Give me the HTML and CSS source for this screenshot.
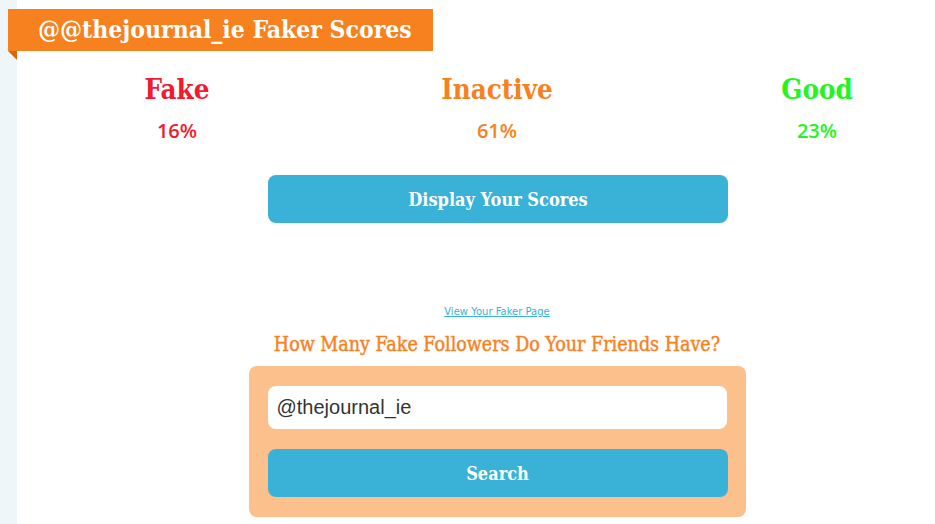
FILE: index.html
```html
<!DOCTYPE html>
<html>
<head>
<meta charset="utf-8">
<link rel="stylesheet" href="styles.css">
</head>
<body>
<div class="page">
  <div class="ribbon">@@thejournal_ie Faker Scores</div>
  <div class="scores">
    <div class="score fake"><div class="label">Fake</div><div class="pct">16%</div></div>
    <div class="score inactive"><div class="label">Inactive</div><div class="pct">61%</div></div>
    <div class="score good"><div class="label">Good</div><div class="pct">23%</div></div>
  </div>
  <div class="center">
    <button class="btn display">Display Your Scores</button>
    <a class="link" href="#">View Your Faker Page</a>
    <h2 class="friends">How Many Fake Followers Do Your Friends Have?</h2>
    <div class="searchbox">
      <input class="field" type="text" value="@thejournal_ie">
      <button class="btn search">Search</button>
    </div>
  </div>
</div>
</body>
</html>
```
FILE: styles.css
```css
html, body { margin: 0; padding: 0; overflow: hidden; }
body { background: #eef6fa; height: 524px; }
.page {
  margin-left: 17px;
  width: 960px;
  height: 524px;
  background: #fff;
  padding-top: 9px;
  box-sizing: border-box;
}
.ribbon {
  position: relative;
  display: inline-block;
  margin-left: -9px;
  height: 42px;
  line-height: 42px;
  padding: 0 21px 0 30px;
  background: #f7811e;
  color: #fff;
  font-family: "DejaVu Serif", serif;
  font-stretch: condensed;
  font-weight: bold;
  font-size: 24.5px;
  white-space: nowrap;
}
.ribbon::after {
  content: "";
  position: absolute;
  left: 0;
  top: 42px;
  border-top: 9px solid #d6680e;
  border-left: 9px solid transparent;
}
.scores {
  display: grid;
  grid-template-columns: 320px 320px 320px;
  margin-top: 20px;
  text-align: center;
}
.label {
  font-family: "DejaVu Serif", serif;
  font-stretch: condensed;
  font-weight: bold;
  font-size: 27.5px;
  line-height: 36px;
}
.pct {
  margin-top: 12px;
  font-family: "Open Sans", sans-serif;
  font-weight: 600;
  font-size: 20px;
  line-height: 24px;
}
.fake { color: #f21a2d; }
.inactive { color: #f7811e; }
.good { color: #25f51e; }
.center {
  display: flex;
  flex-direction: column;
  align-items: center;
}
.btn {
  display: block;
  width: 460px;
  height: 48px;
  border: none;
  border-radius: 8px;
  background: #3ab1d6;
  color: #fff;
  font-family: "DejaVu Serif", serif;
  font-stretch: condensed;
  font-weight: bold;
  font-size: 18px;
  padding: 0;
}
.display { margin-top: 32px; margin-left: 2px; }
.link {
  margin-top: 82px;
  font-family: "DejaVu Sans", sans-serif;
  font-size: 10px;
  line-height: 14px;
  color: #3ab1d6;
  text-decoration: underline;
}
.friends {
  margin: 14px 0 0 0;
  font-family: "DejaVu Serif", serif;
  font-stretch: condensed;
  font-weight: normal;
  font-size: 19.5px;
  line-height: 24px;
  color: #f7811e;
  -webkit-text-stroke: 0.4px #f7811e;
}
.searchbox {
  margin-top: 9px;
  width: 497px;
  box-sizing: border-box;
  padding: 20px 18px 20px 19px;
  background: #fbc08c;
  border-radius: 8px;
}
.field {
  display: block;
  width: 459px;
  height: 43px;
  box-sizing: border-box;
  border: none;
  border-radius: 8px;
  background: #fff;
  padding: 0 9px;
  font-family: "Liberation Sans", Arial, sans-serif;
  font-size: 20px;
  color: #333;
  outline: none;
}
.search { margin-top: 20px; }
```
